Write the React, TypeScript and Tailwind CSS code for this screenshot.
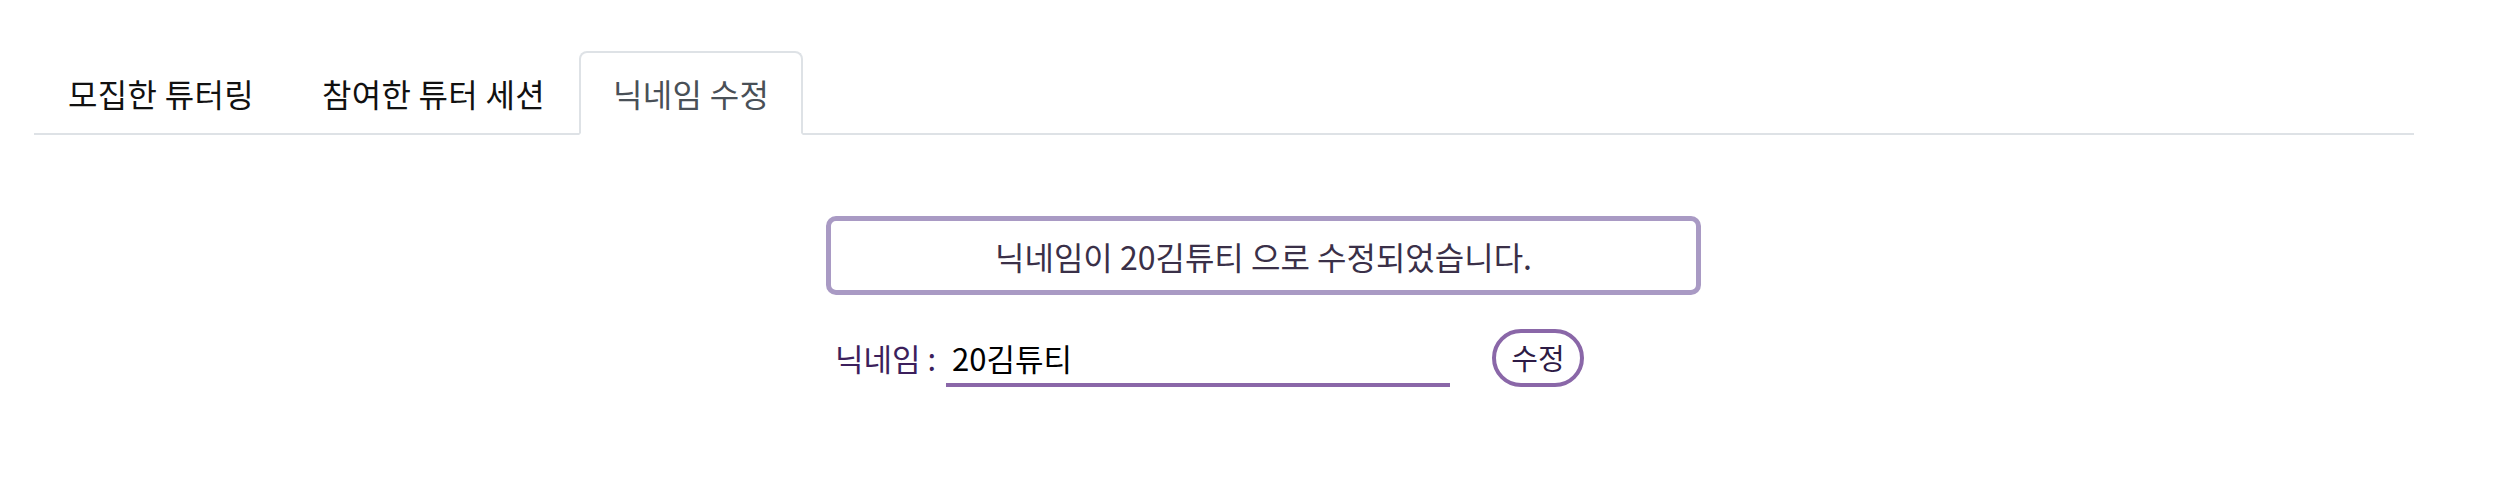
import React from "react";

const tabs = [
  { label: "모집한 튜터링", active: false },
  { label: "참여한 튜터 세션", active: false },
  { label: "닉네임 수정", active: true },
];

export default function App() {
  return (
    <div
      className="w-[2496px] h-[490px] bg-white overflow-hidden"
      style={{ fontFamily: '"Noto Sans CJK KR", "Noto Sans", sans-serif' }}
    >
      <div className="ml-[34px] w-[2380px] pt-[51px]">
        <ul className="flex border-b-2 border-[#dee2e6]">
          {tabs.map((t) => (
            <li key={t.label} className="-mb-[2px]">
              <div
                className={
                  t.active
                    ? "border-2 border-[#dee2e6] border-b-white bg-white rounded-t-[8px] px-[32px] py-[16px] text-[32px] leading-[48px] tracking-[0.3px] text-[#495057]"
                    : "border-2 border-transparent rounded-t-[8px] px-[32px] py-[16px] text-[32px] leading-[48px] tracking-[0.3px] text-[#111111]"
                }
              >
                {t.label}
              </div>
            </li>
          ))}
        </ul>
      </div>

      <div className="ml-[826px] mt-[81px] w-[875px]">
        <div className="h-[79px] border-[5px] border-[#a99ac4] rounded-[10px] flex items-center justify-center text-[32px] text-[#3a3048]">
          닉네임이 20김튜티 으로 수정되었습니다.
        </div>

        <div className="flex items-center h-[58px] mt-[34px]">
          <span className="ml-[9px] w-[111px] text-[31px] text-[#3c1f5c] whitespace-pre">
            닉네임 :
          </span>
          <input
            readOnly
            value="20김튜티"
            className="w-[504px] h-[58px] border-b-4 border-[#8a67a8] pl-[6px] pt-[2px] text-[31px] text-black outline-none bg-transparent"
            style={{ fontFamily: '"Noto Sans CJK KR", "Noto Sans", sans-serif' }}
          />
          <button className="ml-[42px] w-[92px] h-[58px] border-4 border-[#8a67a8] rounded-full flex items-center justify-center text-[29px] text-[#2d1b45] bg-white">
            수정
          </button>
        </div>
      </div>
    </div>
  );
}
